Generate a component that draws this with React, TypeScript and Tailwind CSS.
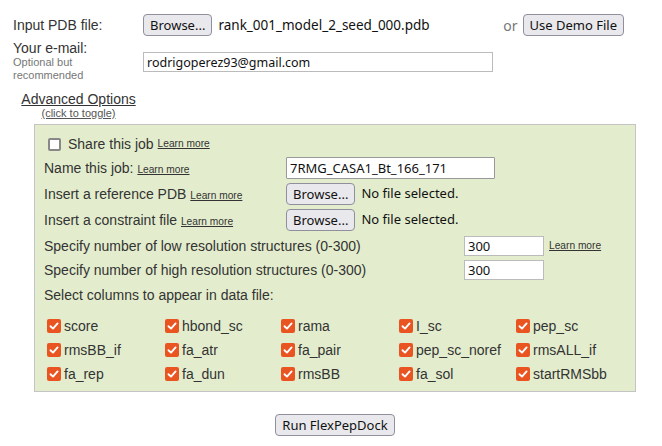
import React from 'react';

const ui = "font-['Noto_Sans',sans-serif]";

const Btn: React.FC<{ children: React.ReactNode; className?: string }> = ({ children, className = '' }) => (
  <button
    className={`${ui} h-[22px] px-[6px] text-[13px] leading-none text-[#111] bg-[#e9e9ed] border border-[#8f8f9d] rounded-[4px] ${className}`}
  >
    {children}
  </button>
);

const Learn: React.FC<{ className?: string }> = ({ className = '' }) => (
  <span className={`text-[10.2px] underline text-[#333] ${className}`}>Learn more</span>
);

const Checked: React.FC<{ label: string }> = ({ label }) => (
  <div className="flex items-center h-[24px]">
    <span className="w-[14px] h-[14px] rounded-[2px] bg-[#e95420] flex items-center justify-center">
      <svg width="10" height="10" viewBox="0 0 10 10">
        <path d="M1.5 5.2 L4 7.6 L8.6 2.4" stroke="#fff" strokeWidth="1.9" fill="none" strokeLinecap="round" strokeLinejoin="round" />
      </svg>
    </span>
    <span className="ml-[3px]">{label}</span>
  </div>
);

const columns = [
  'score', 'hbond_sc', 'rama', 'I_sc', 'pep_sc',
  'rmsBB_if', 'fa_atr', 'fa_pair', 'pep_sc_noref', 'rmsALL_if',
  'fa_rep', 'fa_dun', 'rmsBB', 'fa_sol', 'startRMSbb',
];

export default function App() {
  return (
    <div className="w-[662px] h-[446px] bg-white text-[14px] text-[#333] font-['Liberation_Sans',Arial,sans-serif] overflow-hidden">
      {/* Top form */}
      <div className="flex items-center pt-[14px] pl-[13px]">
        <div className="w-[130px]">Input PDB file:</div>
        <Btn>Browse...</Btn>
        <span className={`${ui} text-[13.5px] text-[#111] ml-[6px]`}>rank_001_model_2_seed_000.pdb</span>
        <span className={`${ui} text-[14px] text-[#777] ml-auto mr-[5px]`}>or</span>
        <Btn className="mr-[38px]">Use Demo File</Btn>
      </div>

      <div className="flex pl-[13px] mt-[4px]">
        <div className="w-[130px]">
          <div className="leading-[16px]">Your e-mail:</div>
          <div className="text-[11px] leading-[13px] text-[#777] w-[80px]">Optional but recommended</div>
        </div>
        <input
          readOnly
          value="rodrigoperez93@gmail.com"
          className={`${ui} w-[350px] h-[20px] mt-[12px] px-[3px] text-[12.5px] text-[#111] bg-white border border-[#bbb] outline-none`}
        />
      </div>

      <div className="pl-[19px] mt-[9px] w-[138px] flex flex-col items-center">
        <span className="underline leading-[16px]">Advanced Options</span>
        <span className="text-[11px] underline leading-[13px] text-[#555]">(click to toggle)</span>
      </div>

      {/* Advanced panel */}
      <div className="ml-[34px] mt-[4px] w-[602px] h-[268px] bg-[#e3edcd] border border-[#c4c4c4] pl-[9px] pt-[10px]">
        <div className="flex items-center h-[18px] pl-[4px]">
          <span className="w-[13px] h-[13px] border-2 border-[#888] rounded-[2px] bg-white" />
          <span className="ml-[7px]">Share this job</span>
          <Learn className="ml-[4px]" />
        </div>

        <div className="flex items-center h-[26px] mt-[2px]">
          <div className="w-[242px]">
            Name this job: <Learn />
          </div>
          <input
            readOnly
            value="7RMG_CASA1_Bt_166_171"
            className={`${ui} w-[209px] h-[22px] px-[3px] text-[13px] text-[#111] bg-white border border-[#999] rounded-[1px] outline-none`}
          />
        </div>

        <div className="flex items-center h-[26px]">
          <div className="w-[242px]">
            Insert a reference PDB <Learn />
          </div>
          <Btn>Browse...</Btn>
          <span className={`${ui} text-[13px] text-[#111] ml-[6px]`}>No file selected.</span>
        </div>

        <div className="flex items-center h-[26px]">
          <div className="w-[242px]">
            Insert a constraint file <Learn />
          </div>
          <Btn>Browse...</Btn>
          <span className={`${ui} text-[13px] text-[#111] ml-[6px]`}>No file selected.</span>
        </div>

        <div className="flex items-center h-[24px] mt-[1px]">
          <div className="w-[420px]">Specify number of low resolution structures (0-300)</div>
          <input
            readOnly
            value="300"
            className={`${ui} w-[80px] h-[20px] px-[3px] text-[13px] text-[#111] bg-white border border-[#bbb] outline-none`}
          />
          <Learn className="ml-[5px]" />
        </div>

        <div className="flex items-center h-[24px]">
          <div className="w-[420px]">Specify number of high resolution structures (0-300)</div>
          <input
            readOnly
            value="300"
            className={`${ui} w-[80px] h-[20px] px-[3px] text-[13px] text-[#111] bg-white border border-[#bbb] outline-none`}
          />
        </div>

        <div className="flex items-center h-[26px]">Select columns to appear in data file:</div>

        <div className="grid grid-cols-[118px_116px_118px_117px_110px] pl-[3px] mt-[6px]">
          {columns.map((c) => (
            <Checked key={c} label={c} />
          ))}
        </div>
      </div>

      <div className="flex justify-center mt-[22px] pl-[8px]">
        <Btn>Run FlexPepDock</Btn>
      </div>
    </div>
  );
}
